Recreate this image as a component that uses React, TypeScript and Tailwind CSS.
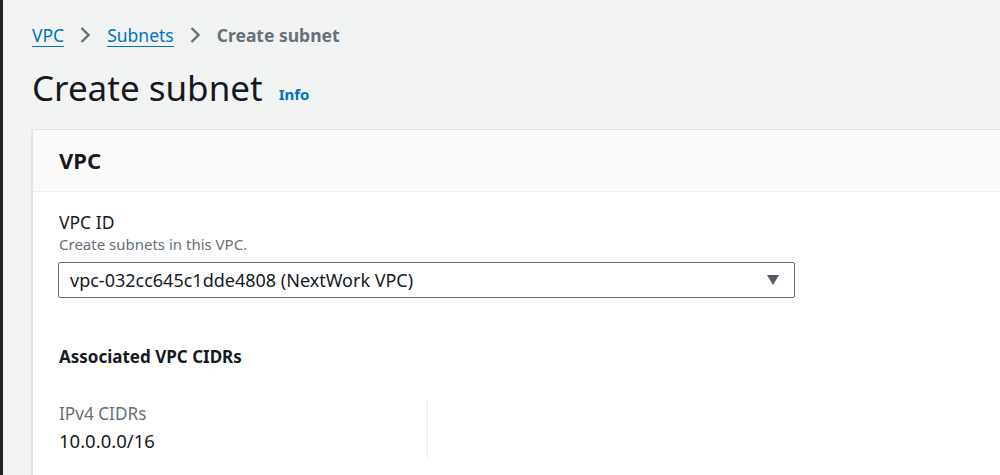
const Chevron = () => (
    <svg width="12" height="18" viewBox="0 0 12 18" className="ml-[15px] mr-[16px] text-[#687078]" fill="none">
        <path d="M2.5 2l7 7-7 7" stroke="currentColor" strokeWidth="2.4" />
    </svg>
)

const App = () => {
    return (
        <div className="flex h-[475px] w-[1000px] overflow-hidden bg-[#f2f3f3] font-['Noto_Sans',sans-serif]">
            <div className="w-[3px] shrink-0 bg-[#232323]" />

            <div className="flex-1 pl-[29px] pt-[23px]">
                <nav className="flex h-[24px] items-center text-[17.5px]">
                    <a className="border-b border-[#0073bb] leading-[22px] text-[#0073bb]">VPC</a>
                    <Chevron />
                    <a className="border-b border-[#0073bb] leading-[22px] text-[#0073bb]">Subnets</a>
                    <Chevron />
                    <span className="font-bold text-[#687078]">Create subnet</span>
                </nav>

                <div className="mt-[21px] flex items-end gap-[16px]">
                    <h1 className="text-[35px] leading-[40px] text-[#16191f]">Create subnet</h1>
                    <span className="mb-[3px] text-[15px] font-bold text-[#0073bb]">Info</span>
                </div>

                <div className="mt-[21px] border-l border-t border-[#e1e4e4] bg-white shadow-[0_1px_1px_0_rgba(0,28,36,0.3)]">
                    <div className="flex h-[62px] items-center border-b border-[#eaeded] bg-[#fafafa] px-[26px]">
                        <h2 className="text-[22px] font-bold text-[#16191f]">VPC</h2>
                    </div>

                    <div className="px-[26px] pt-[18px] pb-[20px]">
                        <div className="text-[17.5px] leading-[24px] text-[#16191f]">VPC ID</div>
                        <div className="text-[15px] leading-[20px] text-[#687078]">Create subnets in this VPC.</div>

                        <div className="-ml-px mt-[8px] flex h-[36px] w-[737px] items-center justify-between rounded-[2px] border border-[#687078] pl-[11px] pr-[14px]">
                            <span className="text-[18px] text-[#16191f]">vpc-032cc645c1dde4808 (NextWork VPC)</span>
                            <svg width="14" height="12" viewBox="0 0 14 12">
                                <path d="M1 1h12L7 11z" fill="#545b64" />
                            </svg>
                        </div>

                        <h3 className="mt-[47px] text-[17px] font-bold leading-[24px] text-[#16191f]">Associated VPC CIDRs</h3>

                        <div className="mt-[31px] flex">
                            <div className="w-[369px] border-r border-[#eaeded] pt-[2px] pb-[2px]">
                                <div className="text-[17.2px] leading-[24px] text-[#687078]">IPv4 CIDRs</div>
                                <div className="text-[18.5px] leading-[30px] text-[#16191f]">10.0.0.0/16</div>
                            </div>
                        </div>
                    </div>
                </div>
            </div>
        </div>
    )
}

export default App;
